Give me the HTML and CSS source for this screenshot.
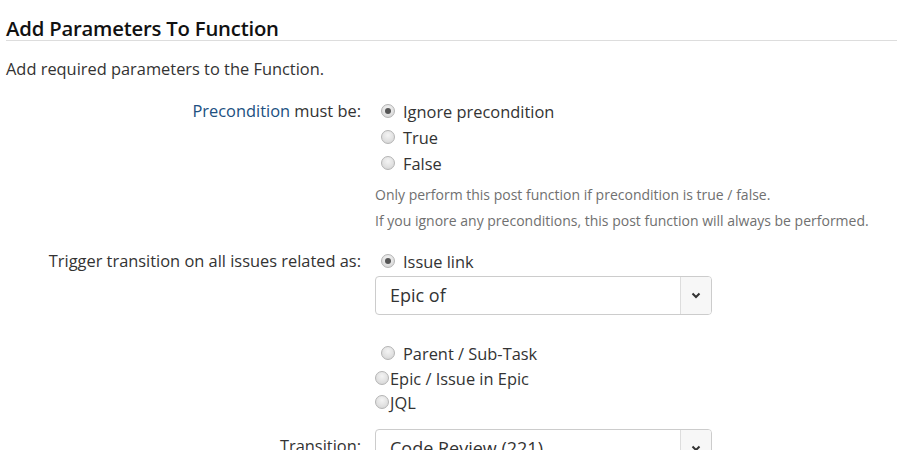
FILE: index.html
```html
<!DOCTYPE html>
<html>
<head>
<meta charset="utf-8">
<link rel="stylesheet" href="styles.css">
</head>
<body>
<h2 class="title">Add Parameters To Function</h2>
<p class="desc">Add required parameters to the Function.</p>
<div class="form">
  <div class="label row1"><a class="link">Precondition</a> must be:</div>
  <div class="field row1">
    <div class="opt indent"><span class="radio checked"></span>Ignore precondition</div>
    <div class="opt indent"><span class="radio"></span>True</div>
    <div class="opt indent"><span class="radio"></span>False</div>
    <div class="help first">Only perform this post function if precondition is true / false.</div>
    <div class="help">If you ignore any preconditions, this post function will always be performed.</div>
  </div>

  <div class="label row2">Trigger transition on all issues related as:</div>
  <div class="field row2">
    <div class="opt indent"><span class="radio checked"></span>Issue link</div>
    <div class="select"><span class="sel-text">Epic of</span><span class="sel-btn"><svg width="10" height="7" viewBox="0 0 10 7"><path d="M1.5 1.5 L5 5 L8.5 1.5" fill="none" stroke="#333" stroke-width="2"/></svg></span></div>
    <div class="opt indent spaced"><span class="radio"></span>Parent / Sub-Task</div>
    <div class="opt tight"><span class="radio"></span>Epic / Issue in Epic</div>
    <div class="opt tight"><span class="radio"></span>JQL</div>
  </div>

  <div class="label row3 lbl3">Transition:</div>
  <div class="field row3">
    <div class="select"><span class="sel-text">Code Review (221)</span><span class="sel-btn"><svg width="10" height="7" viewBox="0 0 10 7"><path d="M1.5 1.5 L5 5 L8.5 1.5" fill="none" stroke="#333" stroke-width="2"/></svg></span></div>
  </div>
</div>
</body>
</html>
```
FILE: styles.css
```css
html, body {
  margin: 0;
  padding: 0;
  background: #fff;
}
body {
  font-family: "Open Sans", "Noto Sans", sans-serif;
  color: #333;
  padding: 0 0 0 6px;
  overflow: hidden;
  height: 450px;
}
.title {
  margin: 0;
  padding: 16px 0 0 0;
  font-size: 20.3px;
  line-height: 24px;
  font-weight: 600;
  color: #111;
  border-bottom: 1px solid #ddd;
  letter-spacing: -0.2px;
}
.desc {
  margin: 16px 0 0 0;
  font-size: 16.4px;
  line-height: 24px;
  color: #333;
}
.form {
  display: grid;
  grid-template-columns: 355px 1fr;
  column-gap: 14px;
  margin-top: 17px;
}
.label {
  text-align: right;
  font-size: 16.4px;
  line-height: 26px;
  color: #333;
}
.link {
  color: #205081;
}
.field {
  font-size: 16.4px;
  color: #333;
}
.opt {
  display: flex;
  align-items: center;
  height: 26px;
}
.opt.indent {
  padding-left: 6px;
}
.opt.tight {
  height: 24px;
}
.opt.spaced {
  margin-top: 25px;
}
.radio {
  display: inline-block;
  box-sizing: border-box;
  width: 14px;
  height: 14px;
  border-radius: 50%;
  border: 1px solid #b4b4b4;
  background: radial-gradient(circle at 50% 35%, #f4f4f4 0%, #e0e0e0 60%, #cfcfcf 100%);
  margin-right: 8px;
  position: relative;
  flex: none;
}
.opt.tight .radio {
  margin-right: 1px;
}
.radio.checked::after {
  content: "";
  position: absolute;
  left: 3px;
  top: 3px;
  width: 6px;
  height: 6px;
  border-radius: 50%;
  background: #555;
}
.help {
  font-size: 14px;
  line-height: 26px;
  color: #707070;
}
.help.first {
  margin-top: 6px;
}
.row2 {
  margin-top: 14px;
}
.row3 {
  margin-top: 13px;
}
.lbl3 {
  padding-top: 6px;
}
.select {
  display: flex;
  box-sizing: border-box;
  width: 337px;
  height: 39px;
  border: 1px solid #ccc;
  border-radius: 4px;
  margin-top: 2px;
  background: #fff;
}
.sel-text {
  flex: 1;
  padding-left: 14px;
  font-size: 18px;
  line-height: 36px;
  color: #333;
}
.sel-btn {
  width: 30px;
  border-left: 1px solid #ddd;
  background: #f7f7f7;
  border-radius: 0 3px 3px 0;
  display: flex;
  align-items: center;
  justify-content: center;
}
```
